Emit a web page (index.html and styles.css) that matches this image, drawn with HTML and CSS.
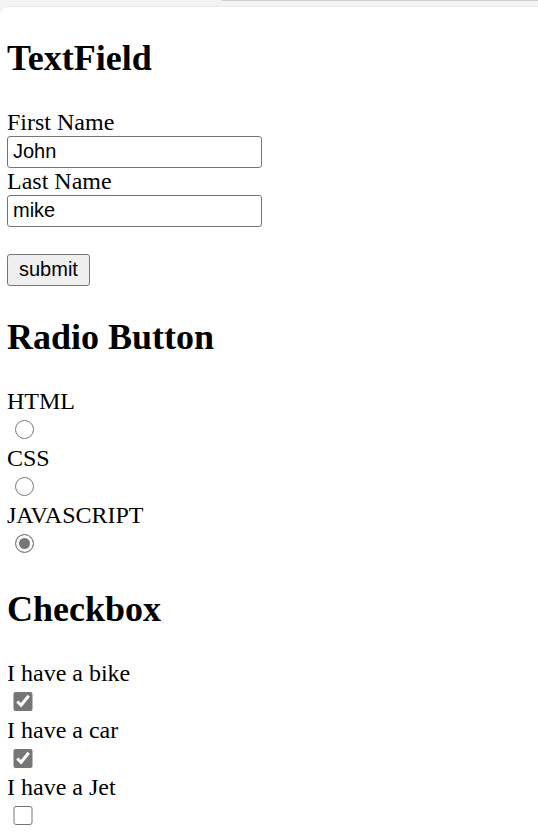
FILE: index.html
```html
<!DOCTYPE html>
<html lang="en">
<head>
<meta charset="utf-8">
<title>Form controls</title>
<link rel="stylesheet" href="styles.css">
</head>
<body>
<div class="topbar"><div class="topbar-line"></div></div>
<main class="page">
  <section class="section">
    <h2 class="title">TextField</h2>
    <form class="form">
      <label class="label" for="fname">First Name</label><br>
      <input class="field" type="text" id="fname" value="John"><br>
      <label class="label" for="lname">Last Name</label><br>
      <input class="field" type="text" id="lname" value="mike"><br>
      <br>
      <input class="btn" type="submit" value="submit">
    </form>
  </section>
  <section class="section">
    <h2 class="title">Radio Button</h2>
    <label class="label" for="html">HTML</label><br>
    <input class="radio" type="radio" id="html" name="lang" value="HTML"><br>
    <label class="label" for="css">CSS</label><br>
    <input class="radio" type="radio" id="css" name="lang" value="CSS"><br>
    <label class="label" for="js">JAVASCRIPT</label><br>
    <input class="radio" type="radio" id="js" name="lang" value="JAVASCRIPT" checked>
  </section>
  <section class="section">
    <h2 class="title">Checkbox</h2>
    <label class="label" for="bike">I have a bike</label><br>
    <input class="check" type="checkbox" id="bike" checked><br>
    <label class="label" for="car">I have a car</label><br>
    <input class="check" type="checkbox" id="car" checked><br>
    <label class="label" for="jet">I have a Jet</label><br>
    <input class="check" type="checkbox" id="jet">
  </section>
</main>
</body>
</html>
```
FILE: styles.css
```css
html, body {
  margin: 0;
  padding: 0;
  height: 100%;
  overflow: hidden;
  background: #f4f4f4;
}

body {
  font-family: "Liberation Serif", "Times New Roman", serif;
  font-size: 24px;
  color: #000;
}

.topbar {
  height: 6px;
  background: #f4f4f4;
}

.topbar-line {
  margin-left: 222px;
  height: 1px;
  background: #cfcfcf;
}

.page {
  background: #fff;
  border-top: 1px solid #e8e8e8;
  border-top-left-radius: 8px;
  padding: 0 0 0 7px;
  min-height: 100%;
}

.section {
  margin: 0;
}

.title {
  font-size: 36px;
  font-weight: bold;
  margin: 29.88px 0;
  line-height: normal;
}

.form {
  margin: 0;
}

.label {
  line-height: normal;
}

.field {
  box-sizing: border-box;
  width: 255px;
  height: 32px;
  margin: 0;
  padding: 1.5px 5px;
  font-family: "Liberation Sans", Arial, sans-serif;
  font-size: 20px;
  color: #000;
  background: #fff;
  border: 1px solid #767676;
  border-radius: 3px;
  outline: none;
}

.btn {
  box-sizing: border-box;
  height: 32px;
  margin: 0;
  padding: 0 11px;
  font-family: "Liberation Sans", Arial, sans-serif;
  font-size: 20px;
  color: #000;
  background: #efefef;
  border: 1px solid #767676;
  border-radius: 3px;
}

.radio {
  appearance: none;
  -webkit-appearance: none;
  box-sizing: border-box;
  width: 19px;
  height: 19px;
  margin: 5px 5px 0 7.5px;
  border: 1.5px solid #7a7a7a;
  border-radius: 50%;
  background: #fff;
  vertical-align: baseline;
}

.radio:checked {
  background: #767676;
  box-shadow: inset 0 0 0 3px #fff;
}

.check {
  width: 19.5px;
  height: 19.5px;
  margin: 4.5px 4.5px 0 6px;
  accent-color: #767676;
}
```
